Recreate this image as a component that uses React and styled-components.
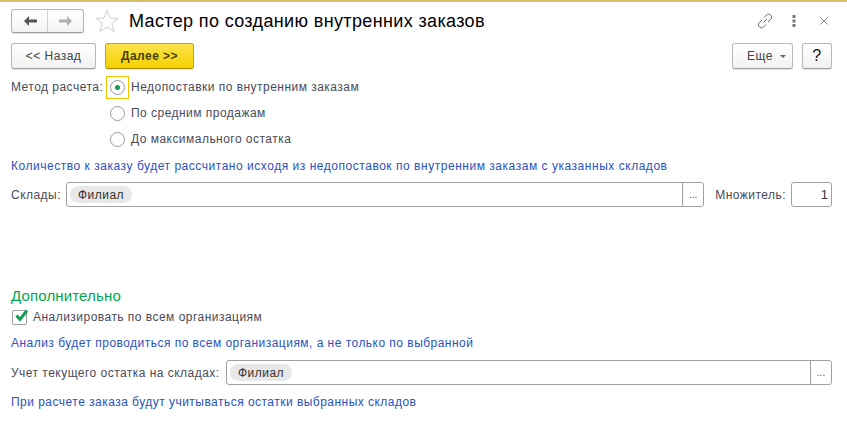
import React from 'react';
import styled, { createGlobalStyle, css } from 'styled-components';

const GlobalStyle = createGlobalStyle`
    html, body {
        margin: 0;
        padding: 0;
        background: #fff;
    }
    body {
        font-family: "Liberation Sans", Arial, sans-serif;
        font-size: 12px;
        color: #4b4b4b;
    }
`;

const TEXT_SPACING = '0.47px';

const Page = styled.div`
    width: 847px;
    height: 446px;
    box-sizing: border-box;
    border-top: 2px solid #d4bf6a;
    padding: 7px 15px 0 11px;
    overflow: hidden;
`;

const TitleBar = styled.div`
    display: flex;
    align-items: center;
    height: 24px;
`;

const NavGroup = styled.div`
    display: flex;
    width: 73px;
    height: 24px;
    box-sizing: border-box;
    border: 1px solid #b5b5b5;
    border-bottom-color: #9c9c9c;
    border-radius: 3px;
    background: linear-gradient(#fff, #f3f3f3);
    box-shadow: 0 1px 1px rgba(0, 0, 0, 0.12);
`;

const NavButton = styled.div`
    flex: 1;
    display: flex;
    align-items: center;
    justify-content: center;
    & + & {
        border-left: 1px solid #cfcfcf;
    }
`;

const StarBox = styled.div`
    display: flex;
    margin-left: 11px;
    margin-right: 10px;
`;

const Title = styled.h1`
    margin: 0;
    font-size: 18px;
    font-weight: 400;
    color: #000;
    flex: 1;
    letter-spacing: 0.36px;
`;

const WindowTools = styled.div`
    display: flex;
    align-items: center;
    padding-right: 4px;
`;

const ToolSlot = styled.span`
    display: flex;
    margin-left: ${p => p.$gap || 0}px;
`;

const ButtonRow = styled.div`
    display: flex;
    align-items: center;
    margin-top: 10px;
`;

const Button = styled.div`
    display: flex;
    align-items: center;
    justify-content: center;
    gap: 7px;
    box-sizing: border-box;
    height: 26px;
    width: ${p => p.$width}px;
    margin-right: ${p => p.$gap || 0}px;
    padding-left: ${p => p.$inset || 0}px;
    border: 1px solid #b8b8b8;
    border-bottom-color: #a0a0a0;
    border-radius: 3px;
    background: linear-gradient(#fff, #f2f2f2);
    box-shadow: 0 1px 1px rgba(0, 0, 0, 0.12);
    color: #444;
    letter-spacing: ${TEXT_SPACING};

    ${p => p.$primary && css`
        border-color: #c9a800;
        border-bottom-color: #a98e00;
        background: linear-gradient(#fbe44d, #f5d000);
        color: #4a4000;
        font-weight: 700;
    `}

    ${p => p.$help && css`
        font-size: 16px;
        color: #111;
    `}
`;

const Spacer = styled.div`
    flex: 1;
`;

const Caret = styled.span`
    width: 0;
    height: 0;
    border-left: 3px solid transparent;
    border-right: 3px solid transparent;
    border-top: 3px solid #666;
`;

const MethodRow = styled.div`
    display: flex;
    margin-top: 5px;
`;

const Label = styled.span`
    color: #4a4a5a;
    white-space: nowrap;
    letter-spacing: ${TEXT_SPACING};
`;

const MethodLabel = styled(Label)`
    width: 95px;
    line-height: 26px;
`;

const RadioList = styled.div`
    display: flex;
    flex-direction: column;
`;

const RadioRow = styled.div`
    display: flex;
    align-items: center;
    height: 26px;
`;

const RadioFrame = styled.div`
    display: flex;
    align-items: center;
    justify-content: center;
    box-sizing: border-box;
    width: 23px;
    height: 23px;
    margin-right: 2px;
    border: 1px solid ${p => (p.$focused ? '#f5c400' : 'transparent')};
`;

const RadioCircle = styled.div`
    display: flex;
    align-items: center;
    justify-content: center;
    box-sizing: border-box;
    width: 15px;
    height: 15px;
    border: 1px solid #9a9a9a;
    border-radius: 50%;
    background: #fff;
`;

const RadioDot = styled.div`
    width: 5px;
    height: 5px;
    border-radius: 50%;
    background: #0f9d58;
`;

const Hint = styled.div`
    color: #2a52be;
    letter-spacing: ${p => p.$spacing || TEXT_SPACING};
    margin-top: ${p => p.$top || 0}px;
    line-height: 14px;
`;

const FieldRow = styled.div`
    display: flex;
    align-items: center;
    margin-top: ${p => p.$top || 0}px;
`;

const FieldLabel = styled(Label)`
    width: ${p => p.$width}px;
`;

const Field = styled.div`
    flex: 1;
    display: flex;
    align-items: stretch;
    box-sizing: border-box;
    height: 25px;
    border: 1px solid #a0a0a0;
    border-radius: 3px;
    background: #fff;
`;

const FieldBody = styled.div`
    flex: 1;
    display: flex;
    align-items: center;
    padding-left: 3px;
`;

const Tag = styled.span`
    display: inline-flex;
    align-items: center;
    height: 17px;
    padding: 0 8px;
    border-radius: 9px;
    background: #e8e8e8;
    color: #333;
    letter-spacing: ${TEXT_SPACING};
`;

const PickButton = styled.div`
    width: 20px;
    border-left: 1px solid #a0a0a0;
    display: flex;
    align-items: center;
    justify-content: center;
    color: #555;
    font-size: 10px;
`;

const MultiplierLabel = styled(Label)`
    margin-left: 11px;
    margin-right: 5px;
`;

const NumberField = styled.div`
    width: 41px;
    height: 25px;
    box-sizing: border-box;
    border: 1px solid #a0a0a0;
    border-radius: 3px;
    padding-right: 3px;
    text-align: right;
    line-height: 23px;
    font-size: 13px;
    color: #333;
`;

const SectionTitle = styled.div`
    margin-top: 80px;
    font-size: 15px;
    line-height: 18px;
    letter-spacing: 0.15px;
    color: #00a651;
`;

const CheckRow = styled.div`
    display: flex;
    align-items: center;
    margin-top: 3px;
    height: 18px;
`;

const CheckBox = styled.div`
    position: relative;
    box-sizing: border-box;
    width: 15px;
    height: 15px;
    margin: 0 6px 0 1px;
    border: 1px solid #a0a0a0;
    border-radius: 2px;
`;

const CheckMark = styled.svg`
    position: absolute;
    left: 1px;
    top: -3px;
    overflow: visible;
`;

const ArrowIcon = ({ dir, color }) => (
    <svg width="16" height="12" viewBox="0 0 16 12">
        <path
            d={dir === 'left' ? 'M7 1 L2 6 L7 11 L7 7.5 L15 7.5 L15 4.5 L7 4.5 Z' : 'M9 1 L14 6 L9 11 L9 7.5 L1 7.5 L1 4.5 L9 4.5 Z'}
            fill={color}
        />
    </svg>
);

const StarIcon = () => (
    <svg width="24" height="24" viewBox="0 0 24 24">
        <path
            d="M12 1.5 L15 9 L23 9.5 L16.8 14.5 L19 22.5 L12 18 L5 22.5 L7.2 14.5 L1 9.5 L9 9 Z"
            fill="#fff"
            stroke="#cfcfcf"
        />
    </svg>
);

const LinkIcon = () => (
    <svg width="16" height="16" viewBox="0 0 16 16" fill="none" stroke="#666" strokeWidth="1">
        <path d="M6.5 9.5 L10 6 M7 4.5 L9.5 2 C10.8 0.8 12.5 0.9 13.7 2.2 C14.9 3.5 14.9 5 13.7 6.2 L11 9 M9 11.5 L6.5 14 C5.2 15.2 3.5 15.1 2.3 13.8 C1.1 12.5 1.1 11 2.3 9.8 L5 7" />
    </svg>
);

const DotsIcon = () => (
    <svg width="4" height="12" viewBox="0 0 4 12" fill="#777">
        <rect x="0.5" y="0" width="3" height="3" />
        <rect x="0.5" y="4.5" width="3" height="3" />
        <rect x="0.5" y="9" width="3" height="3" />
    </svg>
);

const CloseIcon = () => (
    <svg width="8" height="8" viewBox="0 0 8 8" stroke="#888" strokeWidth="1">
        <path d="M0.5 0.5 L7.5 7.5 M7.5 0.5 L0.5 7.5" />
    </svg>
);

const Radio = ({ checked, focused, children }) => (
    <RadioRow>
        <RadioFrame $focused={focused}>
            <RadioCircle>{checked && <RadioDot />}</RadioCircle>
        </RadioFrame>
        <Label>{children}</Label>
    </RadioRow>
);

const App = () => {
    return (
        <Page>
            <GlobalStyle />
            <TitleBar>
                <NavGroup>
                    <NavButton><ArrowIcon dir="left" color="#555" /></NavButton>
                    <NavButton><ArrowIcon dir="right" color="#b0b0b0" /></NavButton>
                </NavGroup>
                <StarBox><StarIcon /></StarBox>
                <Title>Мастер по созданию внутренних заказов</Title>
                <WindowTools>
                    <ToolSlot><LinkIcon /></ToolSlot>
                    <ToolSlot $gap={19}><DotsIcon /></ToolSlot>
                    <ToolSlot $gap={24}><CloseIcon /></ToolSlot>
                </WindowTools>
            </TitleBar>

            <ButtonRow>
                <Button $width={85} $gap={9}>&lt;&lt; Назад</Button>
                <Button $width={89} $primary>Далее &gt;&gt;</Button>
                <Spacer />
                <Button $width={61} $gap={9} $inset={8}>Еще<Caret /></Button>
                <Button $width={30} $help>?</Button>
            </ButtonRow>

            <MethodRow>
                <MethodLabel>Метод расчета:</MethodLabel>
                <RadioList>
                    <Radio checked focused>Недопоставки по внутренним заказам</Radio>
                    <Radio>По средним продажам</Radio>
                    <Radio>До максимального остатка</Radio>
                </RadioList>
            </MethodRow>

            <Hint $top={7} $spacing="0.53px">Количество к заказу будет рассчитано исходя из недопоставок по внутренним заказам с указанных складов</Hint>

            <FieldRow $top={9}>
                <FieldLabel $width={55}>Склады:</FieldLabel>
                <Field>
                    <FieldBody><Tag>Филиал</Tag></FieldBody>
                    <PickButton>...</PickButton>
                </Field>
                <MultiplierLabel>Множитель:</MultiplierLabel>
                <NumberField>1</NumberField>
            </FieldRow>

            <SectionTitle>Дополнительно</SectionTitle>
            <CheckRow>
                <CheckBox>
                    <CheckMark width="15" height="15" viewBox="0 0 15 15" fill="none" stroke="#0f9d58" strokeWidth="3">
                        <path d="M2.5 7.5 L6 11.5 L13 2.5" />
                    </CheckMark>
                </CheckBox>
                <Label>Анализировать по всем организациям</Label>
            </CheckRow>

            <Hint $top={10}>Анализ будет проводиться по всем организациям, а не только по выбранной</Hint>

            <FieldRow $top={10}>
                <FieldLabel $width={215}>Учет текущего остатка на складах:</FieldLabel>
                <Field>
                    <FieldBody><Tag>Филиал</Tag></FieldBody>
                    <PickButton>...</PickButton>
                </Field>
            </FieldRow>

            <Hint $top={10}>При расчете заказа будут учитываться остатки выбранных складов</Hint>
        </Page>
    );
};

export default App;
